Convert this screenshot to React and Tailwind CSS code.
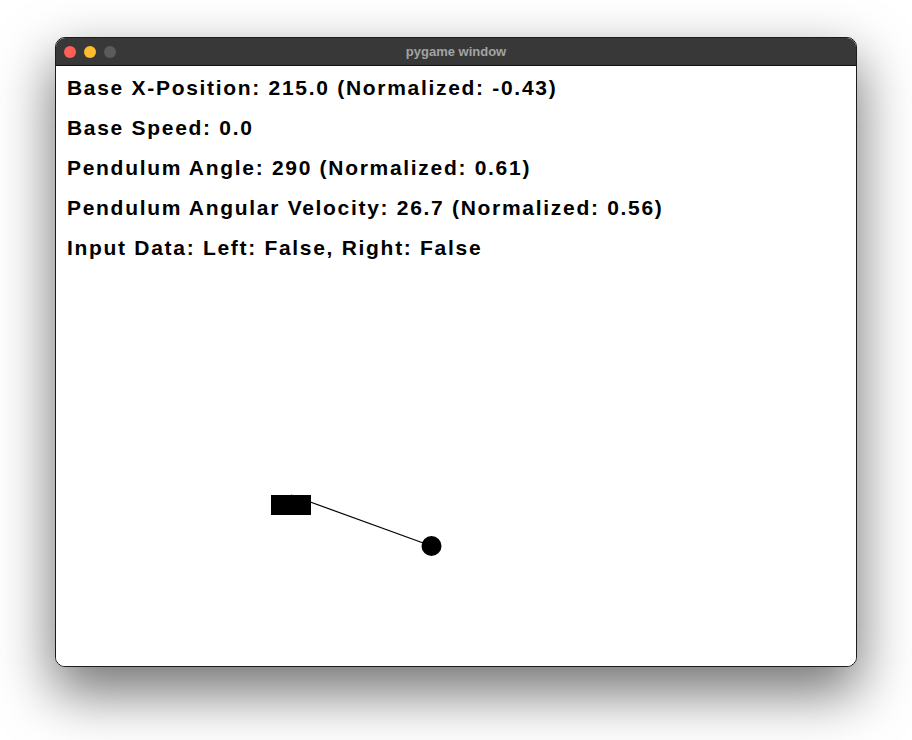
const lines = [
  "Base X-Position: 215.0 (Normalized: -0.43)",
  "Base Speed: 0.0",
  "Pendulum Angle: 290 (Normalized: 0.61)",
  "Pendulum Angular Velocity: 26.7 (Normalized: 0.56)",
  "Input Data: Left: False, Right: False",
];

function TitleBar() {
  return (
    <div className="relative flex items-center h-[28px] bg-[#383838] border-b border-[#111] rounded-t-[9px] pl-[8px] gap-[8px]">
      <span className="w-[12px] h-[12px] rounded-full bg-[#ff5f57]" />
      <span className="w-[12px] h-[12px] rounded-full bg-[#febc2e]" />
      <span className="w-[12px] h-[12px] rounded-full bg-[#5b5b5b]" />
      <div className="absolute inset-0 flex items-center justify-center text-[13px] font-bold text-[#a3a3a3] font-['Liberation_Sans',Arial,sans-serif]">
        pygame window
      </div>
    </div>
  );
}

function Pendulum() {
  return (
    <svg className="absolute inset-0" width="800" height="600" viewBox="0 0 800 600">
      <rect x="215" y="429" width="40" height="20" fill="#000" />
      <line x1="235" y1="429" x2="375.5" y2="480" stroke="#000" strokeWidth="1.2" />
      <circle cx="375.5" cy="480" r="10" fill="#000" />
    </svg>
  );
}

export default function App() {
  return (
    <div className="w-[912px] h-[740px] bg-white overflow-hidden pt-[37px] pl-[55px]">
      <div className="w-[802px] border border-[#1c1c1c] rounded-[10px] bg-white shadow-[0_24px_55px_2px_rgba(0,0,0,0.55)]">
        <TitleBar />
        <div className="relative w-[800px] h-[600px] rounded-b-[9px] overflow-hidden bg-white">
          <Pendulum />
          <div className="relative pt-[2px] pl-[11px] text-[21px] leading-[40px] font-bold text-black tracking-[1.7px] font-['Liberation_Sans',Arial,sans-serif]">
            {lines.map((t) => (
              <div key={t}>{t}</div>
            ))}
          </div>
        </div>
      </div>
    </div>
  );
}
